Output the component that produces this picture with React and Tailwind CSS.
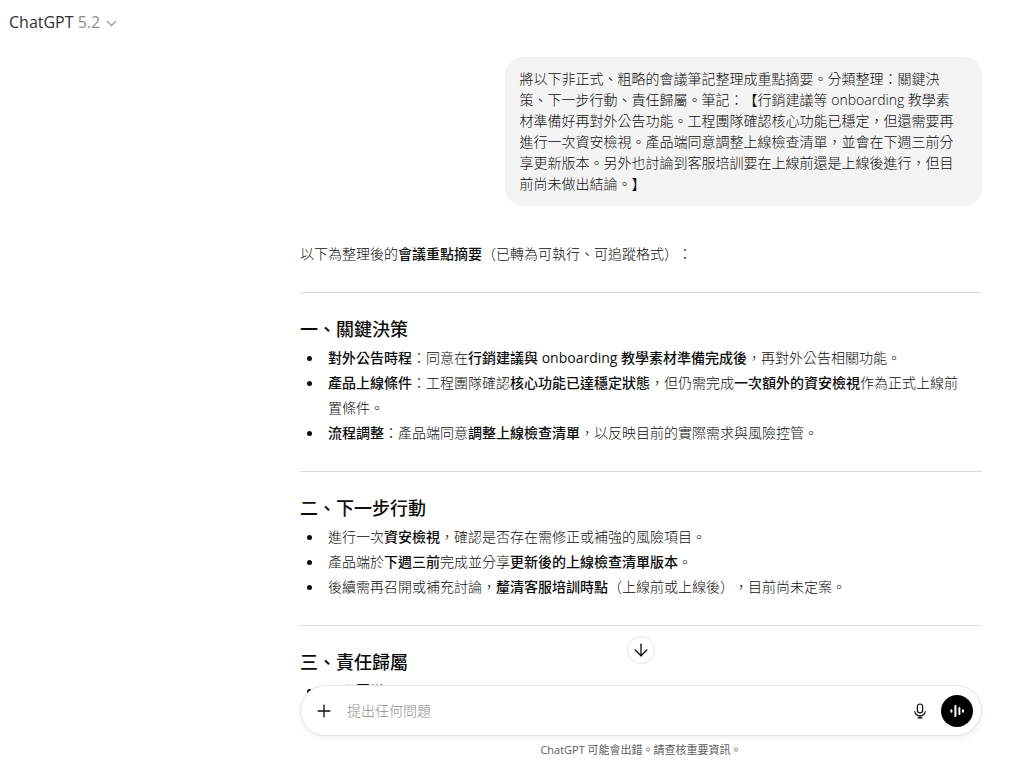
import { useState } from 'react'
import { ArrowDown, ChevronDown, Plus } from 'lucide-react'

// strings starting with * are bold
const sections = [
  {
    title: '一、關鍵決策',
    items: [
      ['*對外公告時程', '：同意在', '*行銷建議與 onboarding 教學素材準備完成後', '，再對外公告相關功能。'],
      ['*產品上線條件', '：工程團隊確認', '*核心功能已達穩定狀態', '，但仍需完成', '*一次額外的資安檢視', '作為正式上線前置條件。'],
      ['*流程調整', '：產品端同意', '*調整上線檢查清單', '，以反映目前的實際需求與風險控管。'],
    ],
  },
  {
    title: '二、下一步行動',
    items: [
      ['進行一次', '*資安檢視', '，確認是否存在需修正或補強的風險項目。'],
      ['產品端於', '*下週三前', '完成並分享', '*更新後的上線檢查清單版本', '。'],
      ['後續需再召開或補充討論，', '*釐清客服培訓時點', '（上線前或上線後），目前尚未定案。'],
    ],
  },
  {
    title: '三、責任歸屬',
    items: [['*工程團隊']],
  },
]

function RichText({ parts }) {
  return parts.map((part, i) =>
    part.startsWith('*') ? <strong key={i} className="font-medium">{part.slice(1)}</strong> : part
  )
}

function MicIcon() {
  return (
    <svg width="16" height="16" viewBox="0 0 16 16" fill="none" stroke="currentColor" strokeWidth="1.2" strokeLinecap="round">
      <rect x="5.4" y="1" width="5.2" height="8.8" rx="2.6" />
      <path d="M2.8 8.6a5.3 5.3 0 0 0 10.4 0M8 13.4v1.5M6 14.9h4" />
    </svg>
  )
}

function VoiceIcon() {
  return (
    <svg width="16" height="16" viewBox="0 0 16 16" fill="none" stroke="currentColor" strokeWidth="2" strokeLinecap="round">
      <path d="M2.4 7.2v1.6M6.4 3v10M10.4 5v6M14 7.2v1.6" />
    </svg>
  )
}

function Section({ title, items }) {
  return (
    <section>
      <hr className="mt-[26px] mb-[22px] border-[#dcdcdc]" />
      <h3 className="mb-0.5 text-[18px] leading-7 font-medium">{title}</h3>
      <ul>
        {items.map((parts, i) => (
          <li key={i} className="flex pr-3 before:mt-[11px] before:mr-4 before:ml-[7px] before:size-[5px] before:shrink-0 before:rounded-full before:bg-current before:content-['']">
            <p><RichText parts={parts} /></p>
          </li>
        ))}
      </ul>
    </section>
  )
}

export default function App() {
  const [message, setMessage] = useState('')

  return (
    <div lang="zh-Hant" className="flex h-screen flex-col overflow-hidden bg-white font-['Open_Sans','Noto_Sans_CJK_TC',sans-serif] text-[14px] font-light text-[#0d0d0d] [text-spacing-trim:space-all]">
      <header className="flex h-11 shrink-0 items-center px-[9px]">
        <button className="flex items-center gap-[3px] text-[16px] font-normal text-[#303030]">
          <span>ChatGPT <span className="text-[#8f8f8f]">5.2</span></span>
          <ChevronDown size={17} strokeWidth={1.8} className="mt-0.5 text-[#8f8f8f]" />
        </button>
      </header>

      <main className="min-h-0 flex-1 overflow-hidden pt-[13px] pl-[258px]">
        <div className="mx-auto w-full max-w-[682px]">
          <div className="mb-[35px] ml-auto w-[70%] rounded-[18px] bg-[#f4f4f4] pt-[11px] pr-6 pb-3 pl-[15px] leading-[21px]">
            將以下非正式、粗略的會議筆記整理成重點摘要。分類整理：關鍵決策、下一步行動、責任歸屬。筆記：【行銷建議等 onboarding 教學素材準備好再對外公告功能。工程團隊確認核心功能已穩定，但還需要再進行一次資安檢視。產品端同意調整上線檢查清單，並會在下週三前分享更新版本。另外也討論到客服培訓要在上線前還是上線後進行，但目前尚未做出結論。】
          </div>

          <article className="leading-[25px]">
            <p>以下為整理後的<strong className="font-medium">會議重點摘要</strong>（已轉為可執行、可追蹤格式）：</p>
            {sections.map(s => <Section key={s.title} {...s} />)}
          </article>
        </div>
      </main>

      <footer className="relative z-10 -mt-5 shrink-0 pl-[258px]">
        <div className="relative mx-auto w-full max-w-[682px]">
          <button aria-label="捲動至底部" className="absolute -top-[49px] left-1/2 flex size-7 -translate-x-1/2 items-center justify-center rounded-full border border-[#e3e3e3] bg-white">
            <ArrowDown size={20} strokeWidth={1.6} className="shrink-0" />
          </button>
          <form
            onSubmit={e => e.preventDefault()}
            className="flex h-[51px] items-center rounded-full border border-[#e3e3e3] bg-white pr-2 pl-[13px] shadow-[0_3px_6px_rgba(0,0,0,0.05)]"
          >
            <button type="button" aria-label="新增" className="flex size-5 items-center justify-center">
              <Plus size={20} strokeWidth={1.6} />
            </button>
            <input
              aria-label="提出任何問題"
              value={message}
              onChange={e => setMessage(e.target.value)}
              placeholder="提出任何問題"
              className="ml-[13px] min-w-0 flex-1 outline-none placeholder:text-[#8f8f8f]"
            />
            <button type="button" aria-label="聽寫" className="mr-[13px] flex size-4 items-center justify-center">
              <MicIcon />
            </button>
            <button type="button" aria-label="語音模式" className="flex size-8 items-center justify-center rounded-full bg-black text-white">
              <VoiceIcon />
            </button>
          </form>
          <p className="text-center text-[11px] leading-7 font-normal text-[#5d5d5d]">ChatGPT 可能會出錯。請查核重要資訊。</p>
        </div>
      </footer>
    </div>
  )
}
